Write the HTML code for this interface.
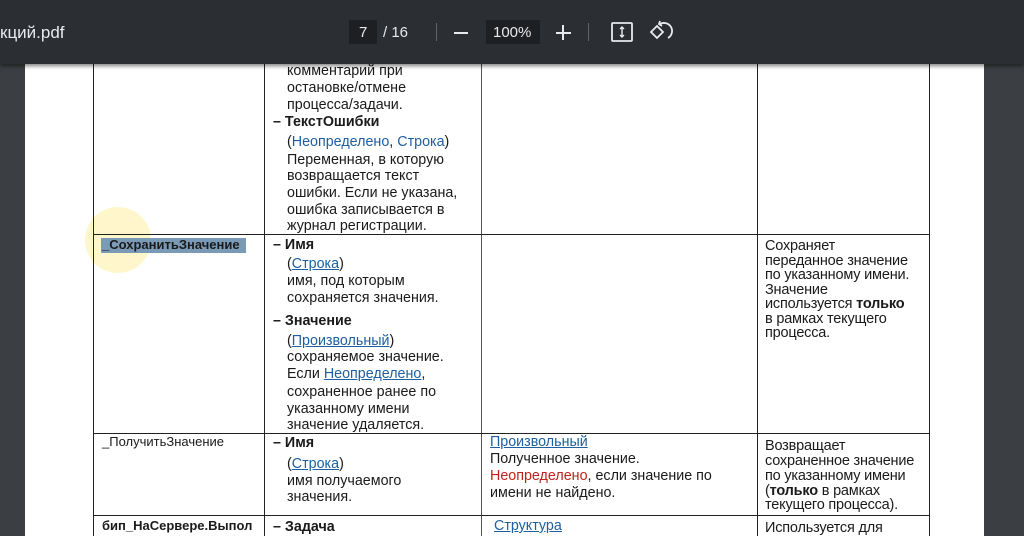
<!DOCTYPE html>
<html><head><meta charset="utf-8"><style>
body{margin:0;width:1024px;height:536px;overflow:hidden;background:#3b3e42;font-family:"Liberation Sans","DejaVu Sans",sans-serif;position:relative}
#bar{position:absolute;left:0;top:0;width:1024px;height:64px;background:#2b2e32;box-shadow:0 2px 4px rgba(0,0,0,.5);z-index:5}
#page{position:absolute;left:25px;top:64px;width:959px;height:472px;background:#fff}
.t{position:absolute;font-size:14.3px;line-height:16px;color:#1a1a1a;white-space:nowrap}
.b{font-weight:bold}
.l{color:#1d5fa0}
.u{text-decoration:underline}
.r{color:#c0221b}
.c4{font-size:14.5px;line-height:15px;letter-spacing:-0.2px}
.c1{font-size:13px;letter-spacing:0}
.vl{position:absolute;width:1px;background:#222}
.hl{position:absolute;height:1px;background:#222}
.w{position:absolute;color:#e8eaed;font-size:15px}
</style></head><body>
<div id="bar">
<div class="w" style="left:0;top:23px;font-size:17px">кций.pdf</div>
<div style="position:absolute;left:349px;top:20px;width:28px;height:24px;background:#1d1f22"></div>
<div class="w" style="left:359px;top:24px">7</div>
<div class="w" style="left:383px;top:24px">/ 16</div>
<div style="position:absolute;left:436px;top:23px;width:1px;height:18px;background:#5f6368"></div>
<div style="position:absolute;left:454px;top:32px;width:14px;height:2px;background:#e8eaed"></div>
<div style="position:absolute;left:486px;top:20px;width:54px;height:24px;background:#1d1f22"></div>
<div class="w" style="left:493px;top:24px">100%</div>
<div style="position:absolute;left:556px;top:32px;width:15px;height:2px;background:#e8eaed"></div>
<div style="position:absolute;left:562px;top:25px;width:2px;height:15px;background:#e8eaed"></div>
<div style="position:absolute;left:588px;top:23px;width:1px;height:18px;background:#5f6368"></div>
<svg style="position:absolute;left:610px;top:21px" width="24" height="22" viewBox="0 0 24 22" fill="none" stroke="#e8eaed" stroke-width="1.8"><rect x="2" y="2" width="20" height="18" rx="1"/><path d="M12 6v10M10 8l2-2 2 2M10 14l2 2 2-2" stroke-width="1.4"/></svg>
<svg style="position:absolute;left:648px;top:20px" width="26" height="24" viewBox="0 0 26 24" fill="none" stroke="#e8eaed" stroke-width="1.8"><path d="M3 12l6-6 6 6-6 6z"/><path d="M12 4a8 8 0 0 1 8 14"/><path d="M12 1l-1 3 3 2"/></svg>
</div>
<div id="page"></div>
<div style="position:absolute;left:85px;top:207px;width:66px;height:66px;border-radius:50%;background:rgba(255,240,160,.55)"></div>
<div class="vl" style="left:93px;top:64px;height:472px"></div>
<div class="vl" style="left:264px;top:64px;height:472px"></div>
<div class="vl" style="left:481px;top:64px;height:472px;background:#555"></div>
<div class="vl" style="left:757px;top:64px;height:472px"></div>
<div class="vl" style="left:929px;top:64px;height:472px"></div>
<div class="hl" style="left:93px;top:234px;width:837px"></div>
<div class="hl" style="left:93px;top:433px;width:837px"></div>
<div class="hl" style="left:93px;top:515px;width:837px"></div>
<div style="position:absolute;left:101px;top:238px;width:145px;height:15px;background:#7b9ab5"></div>

<div class="t" style="left:287px;top:63px">комментарий при</div>
<div class="t" style="left:287px;top:80px">остановке/отмене</div>
<div class="t" style="left:287px;top:97px">процесса/задачи.</div>
<div class="t b" style="left:273px;top:114px">– ТекстОшибки</div>
<div class="t" style="left:287px;top:134px">(<span class="l">Неопределено</span>, <span class="l">Строка</span>)</div>
<div class="t" style="left:287px;top:152px">Переменная, в которую</div>
<div class="t" style="left:287px;top:168px">возвращается текст</div>
<div class="t" style="left:287px;top:185px">ошибки. Если не указана,</div>
<div class="t" style="left:287px;top:202px">ошибка записывается в</div>
<div class="t" style="left:287px;top:218px">журнал регистрации.</div>

<div class="t b c1" style="left:102px;top:237px">_СохранитьЗначение</div>
<div class="t b" style="left:273px;top:237px">– Имя</div>
<div class="t" style="left:287px;top:256px">(<span class="l u">Строка</span>)</div>
<div class="t" style="left:287px;top:273px">имя, под которым</div>
<div class="t" style="left:287px;top:290px">сохраняется значения.</div>
<div class="t b" style="left:273px;top:313px">– Значение</div>
<div class="t" style="left:287px;top:333px">(<span class="l u">Произвольный</span>)</div>
<div class="t" style="left:287px;top:349px">сохраняемое значение.</div>
<div class="t" style="left:287px;top:366px">Если <span class="l u">Неопределено</span>,</div>
<div class="t" style="left:287px;top:384px">сохраненное ранее по</div>
<div class="t" style="left:287px;top:401px">указанному имени</div>
<div class="t" style="left:287px;top:417px">значение удаляется.</div>
<div class="t c4" style="left:765px;top:239px">Сохраняет</div>
<div class="t c4" style="left:765px;top:254px">переданное значение</div>
<div class="t c4" style="left:765px;top:268px">по указанному имени.</div>
<div class="t c4" style="left:765px;top:283px">Значение</div>
<div class="t c4" style="left:765px;top:297px">используется <b>только</b></div>
<div class="t c4" style="left:765px;top:312px">в рамках текущего</div>
<div class="t c4" style="left:765px;top:326px">процесса.</div>

<div class="t c1" style="left:102px;top:434px">_ПолучитьЗначение</div>
<div class="t b" style="left:273px;top:435px">– Имя</div>
<div class="t" style="left:287px;top:456px">(<span class="l u">Строка</span>)</div>
<div class="t" style="left:287px;top:473px">имя получаемого</div>
<div class="t" style="left:287px;top:489px">значения.</div>
<div class="t l u" style="left:490px;top:434px">Произвольный</div>
<div class="t" style="left:490px;top:451px">Полученное значение.</div>
<div class="t" style="left:490px;top:468px"><span class="r">Неопределено</span>, если значение по</div>
<div class="t" style="left:490px;top:485px">имени не найдено.</div>
<div class="t c4" style="left:765px;top:439px">Возвращает</div>
<div class="t c4" style="left:765px;top:454px">сохраненное значение</div>
<div class="t c4" style="left:765px;top:469px">по указанному имени</div>
<div class="t c4" style="left:765px;top:484px">(<b>только</b> в рамках</div>
<div class="t c4" style="left:765px;top:498px">текущего процесса).</div>

<div class="t b c1" style="left:102px;top:518px">бип_НаСервере.Выпол</div>
<div class="t b" style="left:273px;top:519px">– Задача</div>
<div class="t l u" style="left:494px;top:518px">Структура</div>
<div class="t c4" style="left:765px;top:521px">Используется для</div>
</body></html>
